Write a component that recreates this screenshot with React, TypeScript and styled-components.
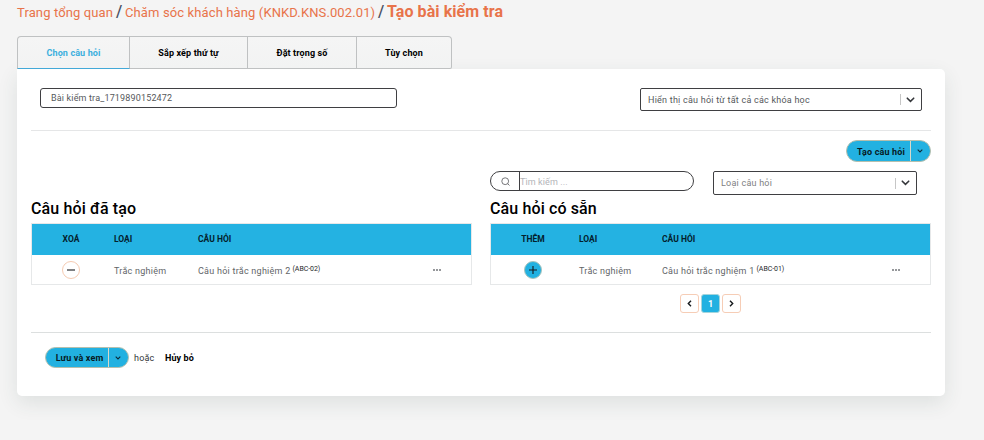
import React from 'react';
import styled, { createGlobalStyle } from 'styled-components';

const GlobalStyle = createGlobalStyle`
  * { box-sizing: border-box; }
  body {
    margin: 0;
    background: #f4f4f4;
    font-family: Roboto, "Liberation Sans", sans-serif;
    font-size: 9px;
    color: #000;
  }
  button, input { font-family: inherit; margin: 0; }
`;

const Page = styled.div`
  width: 984px;
  height: 440px;
  padding-left: 17px;
  overflow: hidden;
`;

const Breadcrumb = styled.nav`
  display: flex;
  align-items: center;
  height: 36px;
  padding-bottom: 11px;
  white-space: nowrap;
`;

const Crumb = styled.a<{ $width: number }>`
  width: ${(p) => p.$width}px;
  font-size: 13px;
  line-height: 18px;
  letter-spacing: 0.12px;
  color: #e8734a;
`;

const CurrentCrumb = styled.span`
  padding-bottom: 2px;
  font-size: 16px;
  line-height: 18px;
  font-weight: 700;
  letter-spacing: 0.07px;
  color: #e8734a;
`;

const Slash = styled.span`
  width: 12px;
  padding: 0 0 2px 3px;
  font-size: 16px;
  line-height: 18px;
  font-weight: 500;
  color: #4b5163;
`;

const Tabs = styled.div`
  display: grid;
  grid-template-columns: 113px 118px 109px 95px;
  width: 435px;
  height: 33px;
`;

const Tab = styled.button<{ $active?: boolean }>`
  padding: 1px 0 0;
  border: 1px solid #bfc1c2;
  border-left-width: ${(p) => (p.$active ? 1 : 0)}px;
  border-bottom-color: ${(p) => (p.$active ? '#43a9d8' : '#bfc1c2')};
  background: linear-gradient(#f5f5f5, #f2f3f3);
  font-size: 9px;
  font-weight: 700;
  letter-spacing: 0.12px;
  color: ${(p) => (p.$active ? '#3bafdd' : '#000')};
  &:first-child { border-top-left-radius: 4px; }
  &:last-child { border-radius: 0 4px 2px 0; }
`;

const Card = styled.main`
  width: 928px;
  height: 327px;
  padding: 19px 14px 0;
  border-radius: 0 5px 5px 5px;
  background: #fff;
  box-shadow: 0 7px 20px rgba(50, 70, 65, 0.11);
`;

const TopFields = styled.div`
  display: flex;
  justify-content: space-between;
  align-items: flex-start;
  height: 43px;
  padding: 0 9px;
  border-bottom: 1px solid #e5e6e7;
`;

const NameInput = styled.input`
  width: 357px;
  height: 20px;
  padding: 0 10px;
  border: 1px solid #3f3f42;
  border-radius: 3px;
  outline: none;
  background: #fff;
  font-size: 9px;
  letter-spacing: 0.16px;
  color: #55585b;
`;

const SelectBox = styled.div<{ $width: number; $muted?: boolean }>`
  display: flex;
  align-items: center;
  width: ${(p) => p.$width}px;
  height: ${(p) => (p.$muted ? 24 : 23)}px;
  padding: 0 6px 0 7px;
  border: 1px solid #3f3f42;
  border-radius: 2px;
  background: #fff;
  font-size: 9px;
  letter-spacing: 0.23px;
  color: ${(p) => (p.$muted ? '#7e8082' : '#55585b')};
  svg { margin-left: 5px; }
`;

const SelectText = styled.span<{ $raised?: boolean }>`
  flex: 1;
  padding-bottom: ${(p) => (p.$raised ? 1 : 0)}px;
  white-space: nowrap;
`;

const SelectRule = styled.span`
  width: 1px;
  height: 11px;
  background: #c6c6c6;
`;

const CreateRow = styled.div`
  display: flex;
  justify-content: flex-end;
  height: 40px;
  padding-top: 9px;
`;

const SplitButton = styled.div<{ $width: number; $height: number }>`
  display: grid;
  grid-template-columns: 1fr 20px;
  width: ${(p) => p.$width}px;
  height: ${(p) => p.$height}px;
  border: 1px solid #b5bfae;
  border-radius: 11px;
  overflow: hidden;
  background: #22b1e1;
`;

const SplitAction = styled.button`
  padding: 1px 0 0 5px;
  border: 0;
  background: transparent;
  font-size: 9px;
  font-weight: 700;
  letter-spacing: 0.15px;
  white-space: nowrap;
  color: #071a24;
`;

const SplitToggle = styled.button`
  display: flex;
  align-items: center;
  justify-content: center;
  padding: 0 1px 0 0;
  border: 0;
  border-left: 1px solid #d6d9cb;
  background: transparent;
  color: #0b2b3a;
`;

const FilterRow = styled.div`
  display: flex;
  height: 27px;
  padding-left: 459px;
  gap: 19px;
`;

const SearchBox = styled.label`
  display: flex;
  width: 204px;
  height: 20px;
  border: 1px solid #3f3f42;
  border-radius: 10px;
  overflow: hidden;
`;

const SearchIconCell = styled.span`
  display: flex;
  align-items: center;
  justify-content: center;
  width: 29px;
  border-right: 1px solid #3f3f42;
`;

const SearchInput = styled.input`
  flex: 1;
  min-width: 0;
  padding: 1px 0 0;
  border: 0;
  outline: none;
  background: transparent;
  font-size: 9px;
  letter-spacing: 0.1px;
  &::placeholder { color: #b3b4b8; opacity: 1; }
`;

const Columns = styled.div`
  display: grid;
  grid-template-columns: 441px 441px;
  column-gap: 18px;
  height: 135px;
  border-bottom: 1px solid #dcdfdf;
  width: 900px;
`;

const Heading = styled.h2`
  height: 25px;
  margin: 0;
  font-size: 16px;
  line-height: 21px;
  font-weight: 500;
  letter-spacing: 0.12px;
`;

const Table = styled.div`
  height: 62px;
  border: 1px solid #e6e8e9;
`;

const Row = styled.div<{ $left: number; $type: number; $head?: boolean }>`
  display: grid;
  grid-template-columns: ${(p) => p.$left}px ${(p) => p.$type}px 1fr 70px;
  align-items: center;
  height: ${(p) => (p.$head ? 31 : 29)}px;
  padding: ${(p) => (p.$head ? '0 0 1px' : '1px 0 0')};
  background: ${(p) => (p.$head ? '#24b2e2' : '#fff')};
  font-size: ${(p) => (p.$head ? 8.5 : 9)}px;
  font-weight: ${(p) => (p.$head ? 700 : 400)};
  letter-spacing: ${(p) => (p.$head ? 0 : 0.25)}px;
  color: ${(p) => (p.$head ? '#03202c' : '#626568')};
  white-space: nowrap;
`;

const TextCell = styled.span`
  padding-top: 2px;
`;

const ActionCell = styled.span`
  display: flex;
  justify-content: center;
  padding-right: 4px;
`;

const MenuCell = styled.span`
  display: flex;
  justify-content: center;
  padding: 0 0 1px 2px;
`;

const Sup = styled.sup`
  position: relative;
  top: -3px;
  margin-left: 2px;
  vertical-align: baseline;
  font-size: 7px;
  line-height: 0;
  letter-spacing: -0.05px;
  color: #25282a;
`;

const RoundButton = styled.button<{ $filled?: boolean }>`
  display: flex;
  align-items: center;
  justify-content: center;
  width: 18px;
  height: 18px;
  padding: 0;
  border: 1px solid ${(p) => (p.$filled ? '#a9c4bd' : '#f5cbb2')};
  border-radius: 50%;
  background: ${(p) => (p.$filled ? '#22b1e1' : '#fff')};
  color: #15191c;
`;

const Pager = styled.div`
  display: flex;
  justify-content: center;
  gap: 2px;
  padding-top: 9px;
`;

const PageButton = styled.button<{ $current?: boolean }>`
  display: flex;
  align-items: center;
  justify-content: center;
  width: 19px;
  height: 19px;
  padding: 0;
  border: 1px solid ${(p) => (p.$current ? '#a5d5dc' : '#f6cdb6')};
  border-radius: 3px;
  background: ${(p) => (p.$current ? '#22b1e1' : '#fff')};
  font-size: 9px;
  font-weight: 700;
  color: ${(p) => (p.$current ? '#fff' : '#15191c')};
`;

const Footer = styled.footer`
  display: flex;
  align-items: center;
  height: 49px;
  padding-left: 14px;
`;

const OrText = styled.span`
  width: 31px;
  margin-left: 5px;
  letter-spacing: 0.2px;
  color: #33363a;
`;

const CancelButton = styled.button`
  padding: 0;
  border: 0;
  background: transparent;
  font-size: 9px;
  font-weight: 700;
  letter-spacing: 0.1px;
  color: #000;
`;

const Chevron = ({ w = 9, d = 'M1 1L4.5 4.5L8 1', h = 6, stroke = 1.6 }) => (
  <svg width={w} height={h} viewBox={`0 0 ${w} ${h}`} fill="none" stroke="currentColor" strokeWidth={stroke}>
    <path d={d} />
  </svg>
);

const SelectChevron = () => (
  <svg width="9" height="6" viewBox="0 0 9 6" fill="none" stroke="#34363a" strokeWidth="1.6" strokeLinecap="round">
    <path d="M1.3 1.2L4.5 4.3L7.7 1.2" />
  </svg>
);

const SmallChevron = () => <Chevron w={6} h={4} d="M0.7 0.7L3 3L5.3 0.7" stroke={1.1} />;

const SearchIcon = () => (
  <svg width="9" height="9" viewBox="0 0 9 9" fill="none" stroke="#66686b" strokeWidth="0.9">
    <circle cx="4.2" cy="4.2" r="3.4" />
    <path d="M6.6 6.6L8.5 8.5" />
  </svg>
);

const Dots = () => (
  <svg width="9" height="2" viewBox="0 0 9 2" fill="#96989b">
    <rect width="2" height="2" />
    <rect x="3" width="2" height="2" />
    <rect x="6" width="2" height="2" />
  </svg>
);

const Sign = ({ plus = false }) => (
  <svg width="8" height="8" viewBox="0 0 8 8" fill="none" stroke="currentColor" strokeWidth="1.1">
    <path d={plus ? 'M0 4H8M4 0V8' : 'M0 4H8'} />
  </svg>
);

type QuestionTableProps = {
  action: string;
  question: string;
  code: string;
  left: number;
  type: number;
  add?: boolean;
};

const QuestionTable = ({ action, question, code, left, type, add }: QuestionTableProps) => (
  <Table>
    <Row $head $left={left} $type={type}>
      <ActionCell>{action}</ActionCell>
      <span>LOẠI</span>
      <span>CÂU HỎI</span>
      <span />
    </Row>
    <Row $left={left} $type={type}>
      <ActionCell>
        <RoundButton $filled={add} aria-label={action}>
          <Sign plus={add} />
        </RoundButton>
      </ActionCell>
      <TextCell>Trắc nghiệm</TextCell>
      <TextCell>
        {question}
        <Sup>({code})</Sup>
      </TextCell>
      <MenuCell>
        <Dots />
      </MenuCell>
    </Row>
  </Table>
);

export default function App() {
  return (
    <>
      <GlobalStyle />
      <Page>
        <Breadcrumb>
          <Crumb $width={96}>Trang tổng quan</Crumb>
          <Slash>/</Slash>
          <Crumb $width={250}>Chăm sóc khách hàng (KNKD.KNS.002.01)</Crumb>
          <Slash>/</Slash>
          <CurrentCrumb>Tạo bài kiểm tra</CurrentCrumb>
        </Breadcrumb>
        <Tabs>
          <Tab $active>Chọn câu hỏi</Tab>
          <Tab>Sắp xếp thứ tự</Tab>
          <Tab>Đặt trọng số</Tab>
          <Tab>Tùy chọn</Tab>
        </Tabs>
        <Card>
          <TopFields>
            <NameInput defaultValue="Bài kiểm tra_1719890152472" />
            <SelectBox $width={282}>
              <SelectText>Hiển thị câu hỏi từ tất cả các khóa học</SelectText>
              <SelectRule />
              <SelectChevron />
            </SelectBox>
          </TopFields>
          <CreateRow>
            <SplitButton $width={85} $height={22}>
              <SplitAction>Tạo câu hỏi</SplitAction>
              <SplitToggle aria-label="Tạo câu hỏi"><SmallChevron /></SplitToggle>
            </SplitButton>
          </CreateRow>
          <FilterRow>
            <SearchBox>
              <SearchIconCell><SearchIcon /></SearchIconCell>
              <SearchInput placeholder="Tìm kiếm ..." />
            </SearchBox>
            <SelectBox $width={204} $muted>
              <SelectText $raised>Loại câu hỏi</SelectText>
              <SelectRule />
              <SelectChevron />
            </SelectBox>
          </FilterRow>
          <Columns>
            <section>
              <Heading>Câu hỏi đã tạo</Heading>
              <QuestionTable action="XOÁ" question="Câu hỏi trắc nghiệm 2" code="ABC-02" left={82} type={84} />
            </section>
            <section>
              <Heading>Câu hỏi có sẵn</Heading>
              <QuestionTable action="THÊM" question="Câu hỏi trắc nghiệm 1" code="ABC-01" left={88} type={83} add />
              <Pager>
                <PageButton aria-label="Trước"><Chevron w={5} h={7} d="M4 0.7L1.3 3.5L4 6.3" stroke={1.4} /></PageButton>
                <PageButton $current>1</PageButton>
                <PageButton aria-label="Sau"><Chevron w={5} h={7} d="M1 0.7L3.7 3.5L1 6.3" stroke={1.4} /></PageButton>
              </Pager>
            </section>
          </Columns>
          <Footer>
            <SplitButton $width={84} $height={21}>
              <SplitAction>Lưu và xem</SplitAction>
              <SplitToggle aria-label="Lưu và xem"><SmallChevron /></SplitToggle>
            </SplitButton>
            <OrText>hoặc</OrText>
            <CancelButton>Hủy bỏ</CancelButton>
          </Footer>
        </Card>
      </Page>
    </>
  );
}
